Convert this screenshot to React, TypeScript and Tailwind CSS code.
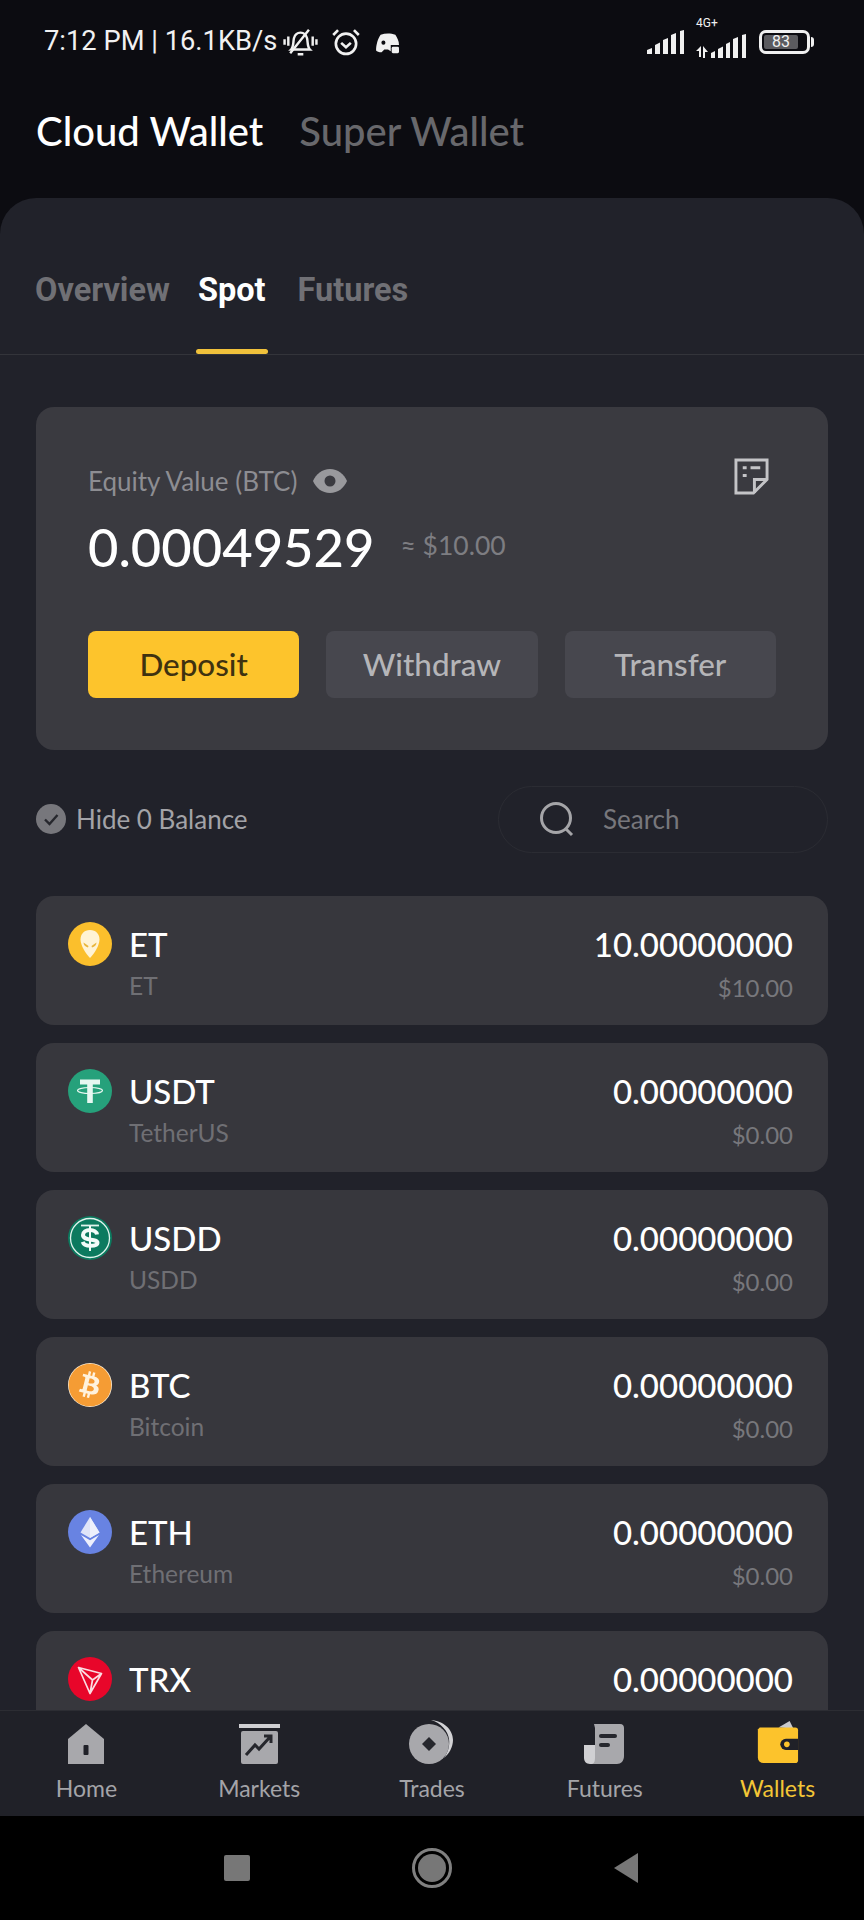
import { FaBitcoin } from "react-icons/fa";

const lato = "font-['Lato','Liberation_Sans',sans-serif]";

type Asset = { symbol: string; name?: string; amount: string; usd?: string; icon: React.ReactNode };

const EtIcon = () => (
  <svg width="44" height="44" viewBox="0 0 44 44">
    <circle cx="22" cy="22" r="22" fill="#fbbf2c" />
    <path d="M22 8c-6 0-9.500 4.200-9.500 9.500 0 6 5.500 14.500 9.500 18.500 4-4 9.500-12.500 9.500-18.500C31.500 12.200 28 8 22 8z" fill="#fff3d4" />
    <path d="M15.500 20.500l5 3.500-.5 1.500c-2.500-.5-4.500-2.500-4.500-5zM28.500 20.500l-5 3.500.5 1.500c2.500-.5 4.500-2.500 4.500-5z" fill="#e9b53a" />
  </svg>
);

const UsdtIcon = () => (
  <svg width="44" height="44" viewBox="0 0 44 44">
    <circle cx="22" cy="22" r="22" fill="#26a17b" />
    <path d="M12 10.500h20v5h-7.200V34h-5.600V15.500H12z" fill="#e8f7f1" />
    <ellipse cx="22" cy="21.500" rx="12.500" ry="3" fill="none" stroke="#e8f7f1" strokeWidth="1.200" />
  </svg>
);

const UsddIcon = () => (
  <svg width="44" height="44" viewBox="0 0 44 44">
    <circle cx="22" cy="22" r="22" fill="#0c7a5f" />
    <circle cx="22" cy="22" r="19.500" fill="none" stroke="#dff3ec" strokeWidth="1.300" />
    <path d="M13 9.500h18" stroke="#dff3ec" strokeWidth="1.800" />
    <path d="M29 18.500c-.5-2.800-3.500-4.500-7-4.500-4 0-7 2-7 5 0 6.500 14.500 3 14.500 8 0 1.500-2.500 2.800-7 2.800-4 0-7-1.500-7.800-4" fill="none" stroke="#f2fbf8" strokeWidth="4" />
    <path d="M22 10v25" stroke="#f2fbf8" strokeWidth="2" />
  </svg>
);

const BtcIcon = () => (
  <span className="relative flex h-[44px] w-[44px] items-center justify-center rounded-full bg-[#fff2dd]">
    <FaBitcoin size={44} color="#f59c34" />
  </span>
);

const EthIcon = () => (
  <svg width="44" height="44" viewBox="0 0 44 44">
    <circle cx="22" cy="22" r="22" fill="#6883e2" />
    <path d="M22 7l-9.500 15.500L22 28l9.500-5.500z" fill="#dfe4f8" />
    <path d="M22 7v21l9.500-5.500z" fill="#eef0fb" />
    <path d="M13 25l9 12.500L31 25l-9 5.300z" fill="#eef0fc" />
  </svg>
);

const TrxIcon = () => (
  <svg width="44" height="44" viewBox="0 0 44 44">
    <circle cx="22" cy="22" r="22" fill="#e8062a" />
    <path d="M10.500 10.500L33.500 16.500 22 36.500zM10.500 10.500L24.500 23 22 36.500M24.500 23L33.500 16.500M10.500 10.500L24.500 23" fill="none" stroke="#fbdde2" strokeWidth="1.700" strokeLinejoin="round" />
  </svg>
);

// the TRX row runs under the tab bar, only its first line shows
const assets: Asset[] = [
  { symbol: "ET", name: "ET", amount: "10.00000000", usd: "$10.00", icon: <EtIcon /> },
  { symbol: "USDT", name: "TetherUS", amount: "0.00000000", usd: "$0.00", icon: <UsdtIcon /> },
  { symbol: "USDD", name: "USDD", amount: "0.00000000", usd: "$0.00", icon: <UsddIcon /> },
  { symbol: "BTC", name: "Bitcoin", amount: "0.00000000", usd: "$0.00", icon: <BtcIcon /> },
  { symbol: "ETH", name: "Ethereum", amount: "0.00000000", usd: "$0.00", icon: <EthIcon /> },
  { symbol: "TRX", amount: "0.00000000", icon: <TrxIcon /> },
];

const SignalBars = () => (
  <svg width="38" height="24" viewBox="0 0 38 24" fill="#f0f0f0">
    <path d="M0 20l5-2v6H0zM8 15l5-2.500V24H8zM16 10l5-2v16h-5zM24 5l5-2v21h-5zM33 1l4-1v24h-4z" />
  </svg>
);

const StatusBar = () => (
  <div className="flex h-[82px] shrink-0 items-center justify-between pl-[44px] pr-[50px] pt-[2px] font-['Roboto',sans-serif] text-[#f1f1f1]">
    <div className="flex items-center">
      <span className="text-[27.300px] leading-none">7:12 PM | 16.1KB/s</span>
      <svg className="ml-[6px]" width="35" height="30" viewBox="0 0 36 32" fill="none" stroke="#f1f1f1" strokeWidth="2.600">
        <path d="M8 24c3-3 2-8 3-12 1-4 4-6 7-6s6 2 7 6c1 4 0 9 3 12z" />
        <path d="M15 29h6M27 3L7 28M1 13v6M5 10v10M31 10v10M35 13v6" />
      </svg>
      <svg className="ml-[12px]" width="32" height="30" viewBox="0 0 34 34" fill="none" stroke="#f1f1f1" strokeWidth="3">
        <circle cx="17" cy="19" r="11.500" />
        <path d="M11.500 18l5.500 5 5.500-5M2.500 9L8 3.500M31.500 9L26 3.500" />
      </svg>
      <svg className="ml-[13px] mt-[3px]" width="26" height="22" viewBox="0 0 26 24" fill="#f1f1f1">
        <path d="M5 2c5-2 11-2 16 0 2 3 4 7 4 11h-9v7l-3-2H9l-3 3c-3 0-5-1-6-2 0-6 2-13 5-17z" />
        <rect x="17" y="15" width="8" height="7" rx="1.500" />
        <circle cx="8" cy="10.500" r="2.200" fill="#0c0c11" />
      </svg>
    </div>
    <div className="flex items-center">
      <SignalBars />
      <div className="relative ml-[11px] w-[54px] self-stretch">
        <span className="absolute left-[0px] top-[-9px] text-[12px] leading-none">4G+</span>
        <svg className="mt-[8px]" width="54" height="24" viewBox="0 0 54 24" fill="#f0f0f0">
          <path d="M5 12v11H3v-6H0zM7 12l5 6H9v6H7zM15 19l4-2v7h-4zM22 15l5-2.500V24h-5zM30 10l4-2v16h-4zM37 5l5-2v21h-5zM46 1l4-1v24h-4z" />
        </svg>
      </div>
      <div className="ml-[9px] flex h-[24px] w-[51px] items-center rounded-[7px] border-[3px] border-[#f0f0f0] p-[2px]">
        <span className="flex h-full w-[83%] items-center justify-center rounded-[2px] bg-[#5b5b5f] text-[16px] leading-none">83</span>
      </div>
      <span className="ml-[1px] h-[10px] w-[3px] rounded-r bg-[#f0f0f0]" />
    </div>
  </div>
);

const NavIcon = ({ name }: { name: string }) => {
  const c = "#a8a8ac";
  if (name === "Home")
    return (
      <svg width="38" height="40" viewBox="0 0 38 40">
        <path d="M19 0L37 15v25H1V15z" fill={c} />
        <rect x="16.500" y="21" width="5" height="10" rx="1" fill="#202128" />
      </svg>
    );
  if (name === "Markets")
    return (
      <svg width="41" height="40" viewBox="0 0 41 40">
        <rect x="0" y="0" width="41" height="4" fill="#cfcfd2" />
        <rect x="2" y="7" width="37" height="33" rx="2" fill={c} />
        <path d="M7 31l9-10 4 4 11-12M25 12h7v7" fill="none" stroke="#26272d" strokeWidth="3" />
      </svg>
    );
  if (name === "Trades")
    return (
      <svg width="45" height="44" viewBox="0 0 45 44">
        <path d="M22 0c12 1 22 9 22 20 0 7-4 14-9 18 4-6 6-12 5-19C39 11 32 3 22 0z" fill="#d2d2d5" />
        <ellipse cx="20" cy="24" rx="20" ry="20" fill={c} />
        <path d="M20 17l7 7-7 7-7-7z" fill="#26272d" />
      </svg>
    );
  if (name === "Futures")
    return (
      <svg width="41" height="40" viewBox="0 0 41 40">
        <path d="M0 21h12v19H6c-4 0-6-3-6-6z" fill="#d0d0d3" />
        <path d="M10 0h26c3 0 4 2 4 4v28c0 5-3 8-7 8H8c3-1 3-4 3-8V4z" fill={c} />
        <rect x="15" y="10" width="18" height="4" rx="2" fill="#26272d" />
        <rect x="15" y="19" width="11" height="4" rx="2" fill="#26272d" />
      </svg>
    );
  return (
    <svg width="43" height="43" viewBox="0 0 46 46">
      <path d="M24 7l12-7 4 8z" fill="#c9c9cb" />
      <path d="M4 7h38a3 3 0 013 3v32a3 3 0 01-3 3H8a6 6 0 01-6-6V9z" fill="#fcc32c" />
      <path d="M45 19H32a6 6 0 000 12h13z" fill="#202128" />
      <circle cx="33" cy="25" r="3" fill="#fcc32c" />
    </svg>
  );
};

export default function App() {
  return (
    <div className={`flex h-[1920px] w-[864px] flex-col overflow-hidden bg-[#0c0c11] ${lato}`}>
      <StatusBar />

      <div className="flex h-[116px] shrink-0 items-start gap-[36px] pl-[36px] pt-[24px] text-[40px] font-medium leading-[50px]">
        <span className="text-white">Cloud Wallet</span>
        <span className="text-[#68686c]">Super Wallet</span>
      </div>

      <main className="flex min-h-0 flex-1 flex-col overflow-hidden rounded-t-[36px] bg-[#21222a]">
        <div className="flex h-[157px] shrink-0 gap-[28px] border-b border-[#33343a] pl-[35px] pt-[69px] font-['Roboto',sans-serif] text-[32.500px] font-bold leading-[46px] text-[#707075]">
          <span>Overview</span>
          <span className="relative text-white">
            Spot
            <span className="absolute bottom-0 -left-[2px] -right-[2px] h-[5px] rounded-sm bg-[#f0c13b]" />
          </span>
          <span className="ml-[4px]">Futures</span>
        </div>

        <section className="mx-[36px] mt-[52px] h-[343px] shrink-0 rounded-[18px] bg-[#3a3a40] px-[52px] pt-[54px]">
          <div className="flex items-start justify-between">
            <div className="flex h-[40px] items-center gap-[15px] text-[26px] text-[#8d8d92]">
              <span>Equity Value (BTC)</span>
              <svg width="36" height="26" viewBox="0 0 36 26">
                <path d="M18 1C10 1 4 6 1 13c3 7 9 12 17 12s14-5 17-12C32 6 26 1 18 1z" fill="#99999d" />
                <circle cx="18" cy="13" r="5.500" fill="#3a3a40" />
              </svg>
            </div>
            <svg className="mr-[7px] -mt-[3px]" width="35" height="37" viewBox="0 0 36 38" fill="none" stroke="#c4c4c7" strokeWidth="3">
              <path d="M2 2h32v20L20 36H2z" />
              <path d="M34 22H21v14" />
              <path d="M9 10h4M17 10h10M9 18h4" />
            </svg>
          </div>
          <div className="mt-[11px] flex items-center">
            <span className="text-[52.500px] font-medium leading-[70px] text-white">0.00049529</span>
            <span className="ml-[26px] mt-[-2px] text-[26.500px] text-[#7d7d82]">≈ $10.00</span>
          </div>
          <div className="mt-[49px] grid grid-cols-3 gap-[27px] text-[31.400px] font-medium leading-none">
            <button className="flex h-[67px] items-center justify-center rounded-[8px] bg-[#fdc42c] text-[#3f3210]">Deposit</button>
            <button className="flex h-[67px] items-center justify-center rounded-[8px] bg-[#47474e] text-[#b5b5b8]">Withdraw</button>
            <button className="flex h-[67px] items-center justify-center rounded-[8px] bg-[#47474e] text-[#b5b5b8]">Transfer</button>
          </div>
        </section>

        <div className="mx-[36px] mt-[35px] flex h-[68px] shrink-0 items-center justify-between">
          <div className="flex items-center gap-[10px]">
            <svg width="30" height="30" viewBox="0 0 30 30">
              <circle cx="15" cy="15" r="15" fill="#77777c" />
              <path d="M9 15.500l4.500 4.500 8-9" fill="none" stroke="#26272d" strokeWidth="2.400" />
            </svg>
            <span className="text-[26px] text-[#a3a3a7]">Hide 0 Balance</span>
          </div>
          <div className="flex h-[67px] w-[330px] items-center rounded-full border border-[#2b2c33] pl-[40px]">
            <svg width="36" height="36" viewBox="0 0 36 36" fill="none" stroke="#a5a5a8" strokeWidth="3">
              <circle cx="17" cy="17" r="14.500" />
              <path d="M27 28l6 6" />
            </svg>
            <span className="ml-[28px] text-[26px] text-[#77777c]">Search</span>
          </div>
        </div>

        <div className="mx-[36px] mt-[43px] flex flex-col gap-[18px]">
          {assets.map((a) => (
            <div key={a.symbol} className="flex h-[129px] shrink-0 justify-between rounded-[18px] bg-[#37373d] pl-[32px] pr-[35px] pt-[26px]">
              <div className="flex gap-[17px]">
                <div className="h-[44px] w-[44px]">{a.icon}</div>
                <div className="flex flex-col">
                  <span className="text-[33px] font-medium leading-[44px] text-white">{a.symbol}</span>
                  {a.name && <span className="mt-[2px] text-[24.500px] leading-[36px] text-[#6f6f74]">{a.name}</span>}
                </div>
              </div>
              <div className="flex flex-col items-end">
                <span className="text-[33px] font-medium leading-[44px] text-white">{a.amount}</span>
                {a.usd && <span className="mt-[4px] text-[24px] leading-[36px] text-[#77777c]">{a.usd}</span>}
              </div>
            </div>
          ))}
        </div>
      </main>

      <nav className="grid h-[106px] shrink-0 grid-cols-5 border-t border-[#2c2d33] bg-[#202128] pt-[7px] text-[23px] leading-[30px] text-[#a4a4a8]">
        {["Home", "Markets", "Trades", "Futures", "Wallets"].map((n) => (
          <div key={n} className={`flex flex-col items-center ${n === "Wallets" ? "text-[#f3c636]" : ""}`}>
            <div className="flex h-[46px] items-end">
              <NavIcon name={n} />
            </div>
            <span className="mt-[9px]">{n}</span>
          </div>
        ))}
      </nav>

      <div className="flex h-[104px] shrink-0 items-center justify-center bg-black">
        <div className="grid w-[585px] grid-cols-3 place-items-center">
          <span className="h-[26px] w-[26px] rounded-[2px] bg-[#777777]" />
          <span className="flex h-[40px] w-[40px] items-center justify-center rounded-full border-[3px] border-[#808080]">
            <span className="h-[28px] w-[28px] rounded-full bg-[#777777]" />
          </span>
          <svg className="mr-[3px]" width="26" height="30" viewBox="0 0 26 30">
            <path d="M25 0v30L1 15z" fill="#777777" />
          </svg>
        </div>
      </div>
    </div>
  );
}
